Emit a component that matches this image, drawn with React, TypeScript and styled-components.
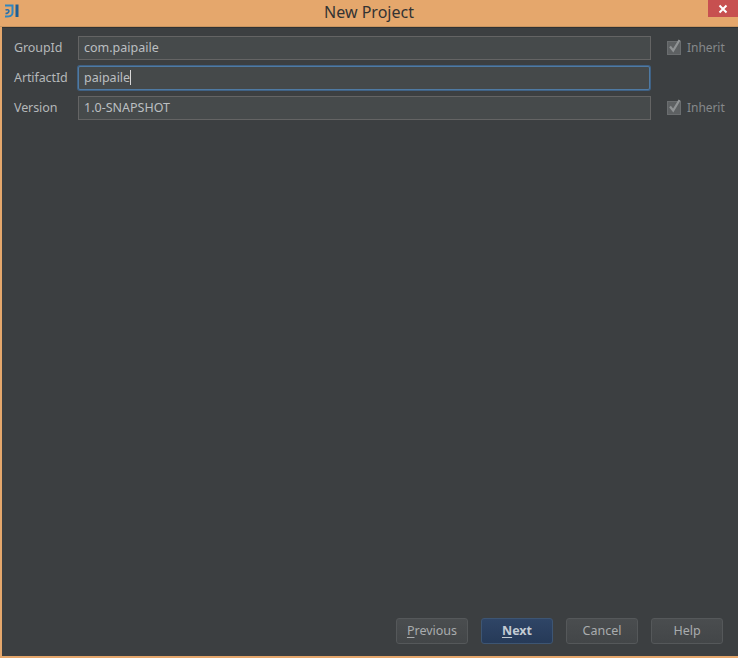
import React from "react";
import styled, { createGlobalStyle } from "styled-components";

const GlobalStyle = createGlobalStyle`
  html, body {
    margin: 0;
    padding: 0;
    background: #3c3f41;
  }
`;

const Window = styled.div`
  width: 738px;
  height: 658px;
  box-sizing: border-box;
  display: flex;
  flex-direction: column;
  background: #e5a76c;
  padding: 0 0 2px 2px;
  font-family: "Noto Sans", "Liberation Sans", sans-serif;
  overflow: hidden;
`;

const TitleBar = styled.div`
  position: relative;
  flex: 0 0 27px;
  display: flex;
  align-items: center;
  justify-content: center;
  margin-left: -2px;
  border-bottom: 1px solid #c99560;
  box-sizing: border-box;
`;

const Title = styled.div`
  font-size: 16px;
  color: #333333;
  line-height: 22px;
  margin-top: -3px;
`;

const AppIcon = styled.svg`
  position: absolute;
  left: 4px;
  top: 3px;
`;

const CloseButton = styled.div`
  position: absolute;
  right: 0;
  top: 0;
  width: 30px;
  height: 17px;
  background: #c75050;
  display: flex;
  align-items: center;
  justify-content: center;
`;

const Content = styled.div`
  flex: 1;
  display: flex;
  flex-direction: column;
  justify-content: space-between;
  background: #3c3f41;
  padding: 9px 15px 12px 12px;
  box-shadow: inset 0 1px 0 #2f3133;
`;

const Form = styled.div`
  display: flex;
  flex-direction: column;
  gap: 6px;
`;

const Row = styled.div`
  display: grid;
  grid-template-columns: 64px 573px 1fr;
  align-items: center;
  height: 24px;
`;

const Label = styled.div`
  font-size: 12.5px;
  letter-spacing: -0.1px;
  color: #b4b7b9;
  padding-bottom: 2px;
`;

const Field = styled.div<{ $focused?: boolean }>`
  height: 24px;
  box-sizing: border-box;
  display: flex;
  align-items: center;
  padding: 0 0 2px 5px;
  font-size: 12.5px;
  color: #bbbfc1;
  background: ${(p) => (p.$focused ? "#45494a" : "#464a4b")};
  border: 1px solid ${(p) => (p.$focused ? "#4f7aa3" : "#646464")};
  border-radius: ${(p) => (p.$focused ? "2px" : "0")};
  box-shadow: ${(p) => (p.$focused ? "0 0 0 1px #3f6184" : "none")};
  margin-right: ${(p) => (p.$focused ? "1px" : "0")};
`;

const Caret = styled.span`
  display: inline-block;
  width: 1px;
  height: 15px;
  background: #d8d8d8;
`;

const Inherit = styled.div`
  display: flex;
  align-items: center;
  gap: 6px;
  padding: 0 0 2px 16px;
  font-size: 12px;
  letter-spacing: -0.05px;
  color: #85888a;
`;

const Footer = styled.div`
  display: flex;
  justify-content: flex-end;
  gap: 13px;
`;

const Button = styled.div<{ $primary?: boolean }>`
  width: 72px;
  height: 26px;
  box-sizing: border-box;
  display: flex;
  align-items: center;
  justify-content: center;
  padding-bottom: 2px;
  font-size: 12.5px;
  font-weight: ${(p) => (p.$primary ? 700 : 400)};
  color: ${(p) => (p.$primary ? "#c3cbd3" : "#a9acae")};
  background: ${(p) =>
    p.$primary
      ? "linear-gradient(#2f4566, #263a58)"
      : "linear-gradient(#4a4d4f, #434648)"};
  border: 1px solid ${(p) => (p.$primary ? "#3d5573" : "#55585a")};
  border-radius: 3px;

  u {
    text-underline-offset: 2px;
  }
`;

function InheritCheck() {
  return (
    <Inherit>
      <svg width="14" height="16" viewBox="0 0 14 16">
        <rect x="0.5" y="2.5" width="13" height="13" fill="#5d6062" stroke="#6a6d6f" />
        <path d="M3 7.5 L6.2 11.5 L12.5 1" fill="none" stroke="#8f9294" strokeWidth="2.2" />
      </svg>
      Inherit
    </Inherit>
  );
}

export default function App() {
  return (
    <>
      <GlobalStyle />
      <Window>
        <TitleBar>
          <AppIcon width="16" height="16" viewBox="0 0 16 16">
            <path d="M1 2.5 H8.5 V10 Q8.5 14 1 13.5" fill="none" stroke="#2f86c0" strokeWidth="2" />
            <path d="M1.5 7 Q4.5 6 5 8 Q4.5 10.5 1.5 10.5" fill="none" stroke="#2a6fa8" strokeWidth="1.5" />
            <path d="M13 1.5 V14" stroke="#1f5f95" strokeWidth="3" />
          </AppIcon>
          <Title>New Project</Title>
          <CloseButton>
            <svg width="10" height="10" viewBox="0 0 10 10">
              <path d="M1.5 1.5 L8.5 8.5 M8.5 1.5 L1.5 8.5" stroke="#ffffff" strokeWidth="2" />
            </svg>
          </CloseButton>
        </TitleBar>
        <Content>
          <Form>
            <Row>
              <Label>GroupId</Label>
              <Field>com.paipaile</Field>
              <InheritCheck />
            </Row>
            <Row>
              <Label>ArtifactId</Label>
              <Field $focused>
                paipaile
                <Caret />
              </Field>
            </Row>
            <Row>
              <Label>Version</Label>
              <Field>1.0-SNAPSHOT</Field>
              <InheritCheck />
            </Row>
          </Form>
          <Footer>
            <Button>
              <span>
                <u>P</u>revious
              </span>
            </Button>
            <Button $primary>
              <span>
                <u>N</u>ext
              </span>
            </Button>
            <Button>Cancel</Button>
            <Button>Help</Button>
          </Footer>
        </Content>
      </Window>
    </>
  );
}
